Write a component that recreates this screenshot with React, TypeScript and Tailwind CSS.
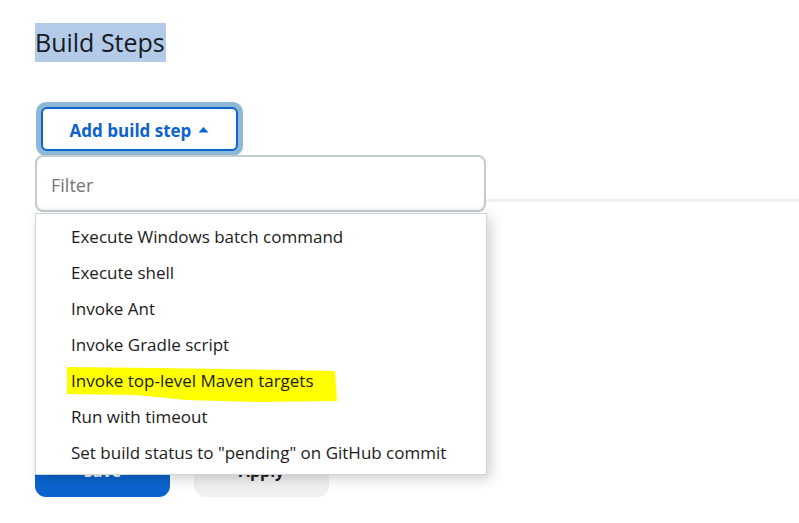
import React from "react";

const items = [
  "Execute Windows batch command",
  "Execute shell",
  "Invoke Ant",
  "Invoke Gradle script",
  "Invoke top-level Maven targets",
  "Run with timeout",
  'Set build status to "pending" on GitHub commit',
];

export default function App() {
  return (
    <div
      className="w-[799px] h-[523px] bg-white overflow-hidden relative text-[#1b1b1b]"
      style={{ fontFamily: '"Open Sans", "Noto Sans", sans-serif' }}
    >
      <div className="pl-[35px] pt-[23px]">
        <h2 className="text-[25px] leading-[39px] font-medium h-[39px]">
          <span className="inline-block bg-[#b3cbe9] text-[#161a21] h-[39px] pr-[1px]">Build Steps</span>
        </h2>

        <div className="mt-[40px] ml-[1px] w-[207px] h-[54px] rounded-[10px] bg-[#8db9d6] p-[5px]">
          <button className="w-full h-full rounded-[6px] border-[2.5px] border-[#0b63ce] bg-white flex items-center justify-center gap-[7px] pt-[3px] text-[#0b63ce] font-bold text-[17px]">
            <span>Add build step</span>
            <svg width="11" height="7" viewBox="0 0 11 7" className="mt-[-2px]">
              <path d="M0.5 6.5 L5.5 1 L10.5 6.5 Z" fill="#0b63ce" />
            </svg>
          </button>
        </div>

        <div className="flex -mt-[1px]">
          <div className="w-[451px] h-[57px] rounded-[8px] border-2 border-[#c3ccd1] bg-white flex items-center pl-[14px] pt-[3px] text-[18px] text-[#767676] shadow-[inset_0_-2px_2px_rgba(0,0,0,0.03)]">
            Filter
          </div>
          <div className="flex-1 h-[3px] mt-[44px] bg-[#f1f1f5]" />
        </div>

        <div className="flex gap-[24px] mt-[233px]">
          <div className="w-[135px] h-[52px] rounded-[11px] bg-[#0b63ce] text-white font-bold flex items-center justify-center text-[16px]">
            Save
          </div>
          <div className="w-[135px] h-[52px] rounded-[11px] bg-[#f1f1f4] text-[#1b1b1b] font-bold flex items-center justify-center text-[16px]">
            Apply
          </div>
        </div>
      </div>

      <div className="absolute left-[35px] top-[213px] w-[452px] h-[262px] bg-white border border-[#cfd3d6] shadow-[4px_4px_12px_rgba(0,0,0,0.18)] pt-[5px] pb-[3px]">
        <svg
          className="absolute left-0 top-0"
          width="452"
          height="262"
          viewBox="0 0 452 262"
        >
          <polygon
            points="31,153 120,154 250,156 299,157 301,187 220,188 150,186 100,181 31,180"
            fill="#ffff00"
          />
        </svg>
        {items.map((t) => (
          <div
            key={t}
            className="relative h-[36px] flex items-center pl-[35px] text-[17px] text-[#1b1b1b]"
          >
            {t}
          </div>
        ))}
      </div>
    </div>
  );
}
